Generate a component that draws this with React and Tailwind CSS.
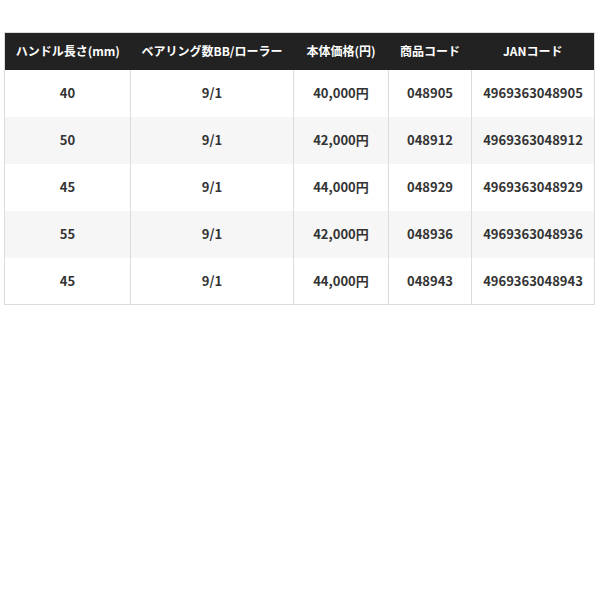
const rows = [
  { handle: '40', bearing: '9/1', price: '40,000円', code: '048905', jan: '4969363048905' },
  { handle: '50', bearing: '9/1', price: '42,000円', code: '048912', jan: '4969363048912' },
  { handle: '45', bearing: '9/1', price: '44,000円', code: '048929', jan: '4969363048929' },
  { handle: '55', bearing: '9/1', price: '42,000円', code: '048936', jan: '4969363048936' },
  { handle: '45', bearing: '9/1', price: '44,000円', code: '048943', jan: '4969363048943' },
];

const headers = ['ハンドル長さ(mm)', 'ベアリング数BB/ローラー', '本体価格(円)', '商品コード', 'JANコード'];
const widths = ['w-[126px]', 'w-[163px]', 'w-[95px]', 'w-[83px]', 'w-[123px]'];

export default function App() {
  return (
    <div className="min-h-screen bg-white pt-[32px] pl-[4px] font-['Noto_Sans_CJK_JP','Noto_Sans',sans-serif]">
      <table className="w-[590px] table-fixed border-collapse border border-[#dcdcdc] text-[13px] font-bold">
        <thead>
          <tr className="h-[37px] bg-[#222222] text-white text-[12px]">
            {headers.map((h, i) => (
              <th key={h} className={`${widths[i]} p-0 text-center font-bold whitespace-nowrap`}>
                {h}
              </th>
            ))}
          </tr>
        </thead>
        <tbody className="text-[#333333]">
          {rows.map((r, i) => (
            <tr key={r.code} className={`h-[47px] ${i % 2 === 1 ? 'bg-[#f6f6f6]' : 'bg-white'}`}>
              <td className="border-r border-[#dcdcdc] text-center">{r.handle}</td>
              <td className="border-r border-[#dcdcdc] text-center">{r.bearing}</td>
              <td className="border-r border-[#dcdcdc] text-center">{r.price}</td>
              <td className="border-r border-[#dcdcdc] text-center">{r.code}</td>
              <td className="text-center">{r.jan}</td>
            </tr>
          ))}
        </tbody>
      </table>
    </div>
  );
}
